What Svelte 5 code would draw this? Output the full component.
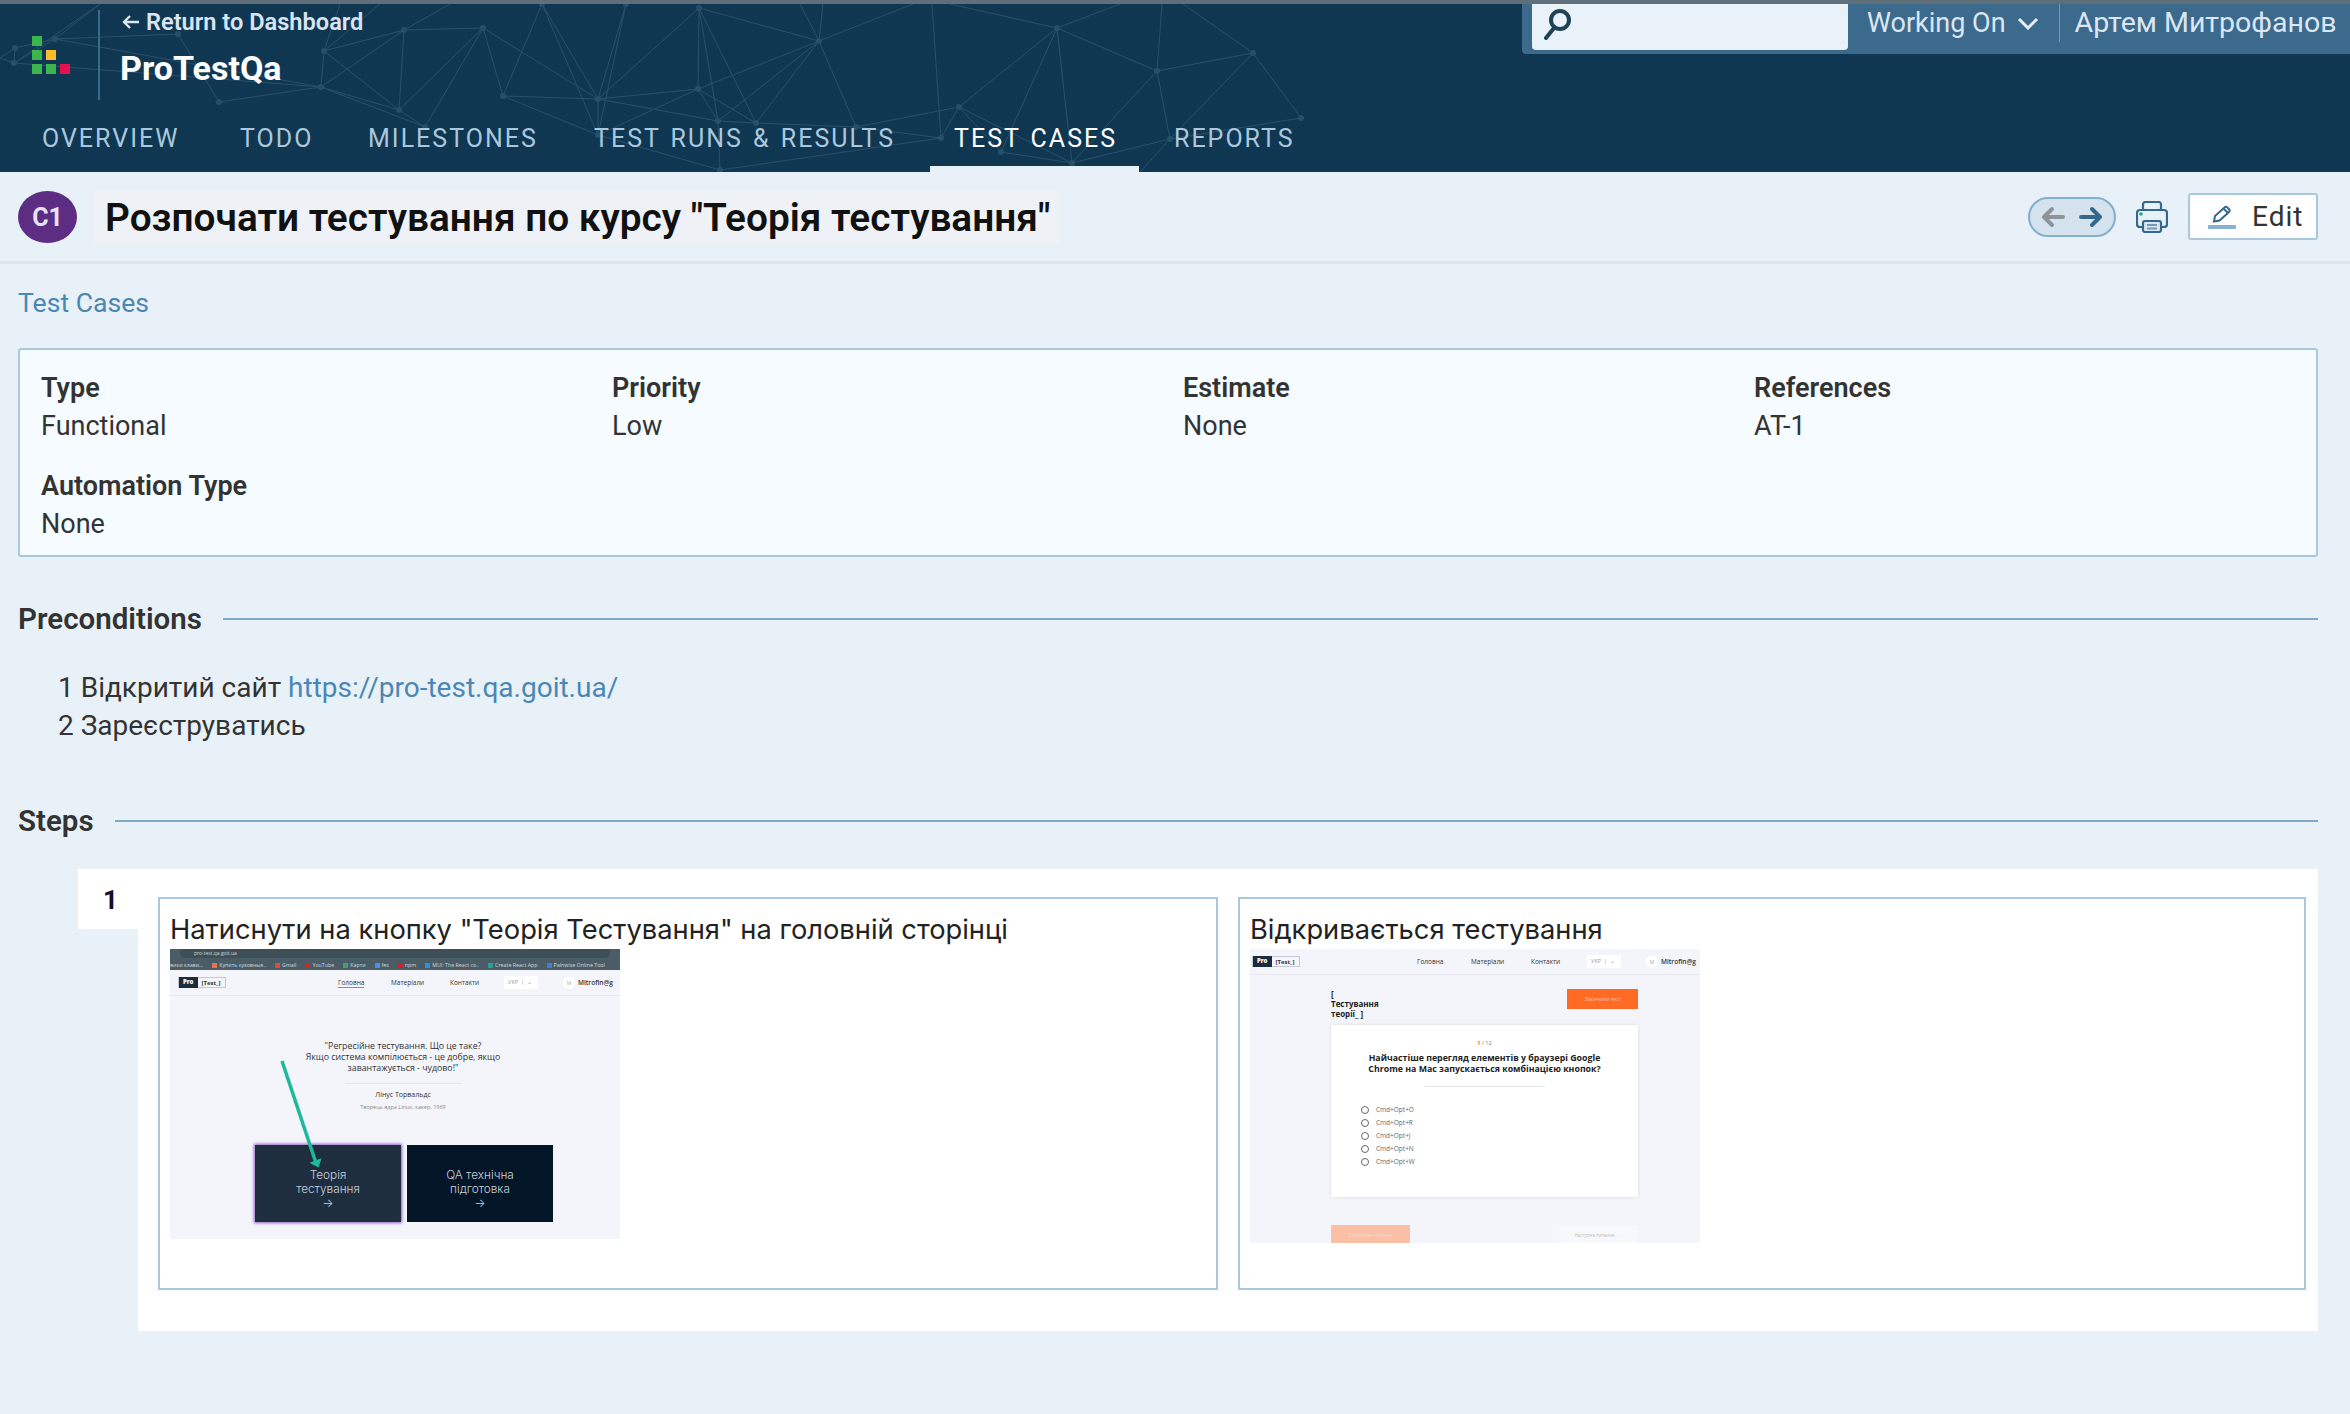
<script>
  const nodes = [
    [15,48],[14,63],[55,39],[178,34],[219,102],[324,51],[321,87],[404,30],[399,110],[483,28],[425,127],
    [503,96],[598,99],[542,4],[626,4],[699,8],[698,89],[819,41],[718,121],[756,123],[856,127],[959,107],
    [941,138],[598,135],[720,170],[1057,28],[1157,71],[1253,53],[1301,118],[1170,139],[1072,163],[1001,152]
  ];
  const tops = [
    [100,4],[340,4],[380,4],[450,4],[1162,4],[1183,4],[1120,4],[950,4],[800,4],[823,4],[0,38],[0,58],[913,4],[932,4],[1140,172]
  ];
  const all = [...nodes, ...tops];
  // ids index into `all`, ids from 32 are the points off the edge of the bar
  const edges = [
    [0,1],[0,2],[1,2],[2,3],[2,32],[1,32],[0,43],[1,43],[2,6],[1,6],[3,4],[4,6],[6,8],[5,6],[5,7],[6,7],[7,8],
    [7,9],[5,8],[8,9],[8,10],[6,10],[9,10],[33,5],[34,5],[35,7],[9,11],[9,12],[13,11],[13,12],[14,12],[14,23],
    [13,23],[11,12],[11,23],[12,15],[12,16],[15,16],[15,17],[16,17],[12,18],[15,18],[15,19],[16,18],[16,19],[18,19],
    [17,18],[17,19],[16,23],[12,23],[18,24],[23,24],[19,20],[17,20],[20,21],[20,22],[21,22],[40,17],[41,17],[44,17],
    [39,25],[25,26],[25,21],[25,31],[25,30],[26,27],[26,29],[26,30],[27,29],[27,28],[28,29],[29,30],[21,31],[21,30],
    [31,30],[22,24],[36,26],[37,27],[38,25],[46,29],[45,22]
  ];
  const tabs = ["OVERVIEW", "TODO", "MILESTONES", "TEST RUNS & RESULTS", "TEST CASES", "REPORTS"];
  const fields = [
    ["Type", "Functional"], ["Priority", "Low"], ["Estimate", "None"], ["References", "AT-1"], ["Automation Type", "None"]
  ];
  const bookmarks = [
    ["Купить кузовные..", "#e8734a"], ["Gmail", "#e04a3f"], ["YouTube", "#e02020"], ["Карти", "#3fa35c"], ["fes", "#4c8bf5"],
    ["npm", "#c8242b"], ["MUI: The React co..", "#2f8fe0"], ["Create React App", "#2aa198"], ["Palnwise Online Tool", "#3d7fd0"]
  ];
  const options = ["Cmd+Opt+O", "Cmd+Opt+R", "Cmd+Opt+J", "Cmd+Opt+N", "Cmd+Opt+W"];
</script>

<div class="page">
  <header class="header">
    <svg class="network" width="2350" height="172" viewBox="0 0 2350 172">
      {#each edges as e}
        <line x1={all[e[0]][0]} y1={all[e[0]][1]} x2={all[e[1]][0]} y2={all[e[1]][1]} />
      {/each}
      {#each nodes as n}
        <circle cx={n[0]} cy={n[1]} r="3" />
      {/each}
    </svg>
    <div class="top">
      <div class="logo">
        <i class="g"></i><i></i><i></i>
        <i class="g"></i><i class="y"></i><i></i>
        <i class="g"></i><i class="g"></i><i class="r"></i>
      </div>
      <div class="brand">
        <div class="back">
          <svg width="18" height="16" viewBox="0 0 18 16"><path d="M8 2 2 8l6 6M2 8h15" fill="none" stroke="#dbe4f3" stroke-width="2.4"/></svg>
          Return to Dashboard
        </div>
        <div class="project">ProTestQa</div>
      </div>
      <div class="panel">
        <div class="search">
          <svg width="30" height="32" viewBox="0 0 30 32"><circle cx="18" cy="12" r="9" fill="none" stroke="#1e4258" stroke-width="4"/><path d="M12 20 4 30" stroke="#1e4258" stroke-width="4" stroke-linecap="round"/></svg>
        </div>
        <div class="working">
          Working On
          <svg width="22" height="14" viewBox="0 0 22 14"><path d="m2 3 9 9 9-9" fill="none" stroke="#e6eef8" stroke-width="3"/></svg>
        </div>
        <div class="user">Артем Митрофанов</div>
      </div>
    </div>
    <nav class="tabs">
      {#each tabs as tab}
        <div class="tab" class:active={tab === "TEST CASES"}><span>{tab}</span></div>
      {/each}
    </nav>
  </header>

  <div class="titlebar">
    <div class="badge">C1</div>
    <h1>Розпочати тестування по курсу "Теорія тестування"</h1>
    <div class="actions">
      <div class="pager">
        <svg width="24" height="22" viewBox="0 0 24 22"><path d="M11 3 3 11l8 8M3 11h19" fill="none" stroke="#8f9499" stroke-width="4" stroke-linecap="round" stroke-linejoin="round"/></svg>
        <svg width="24" height="22" viewBox="0 0 24 22"><path d="m13 3 8 8-8 8M21 11H2" fill="none" stroke="#35688d" stroke-width="4" stroke-linecap="round" stroke-linejoin="round"/></svg>
      </div>
      <svg class="printer" width="32" height="32" viewBox="0 0 32 32">
        <path d="M7 9V3.5A2.5 2.5 0 0 1 9.500 1h13A2.500 2.500 0 0 1 25 3.500V9M7 26H4a3 3 0 0 1-3-3V12a3 3 0 0 1 3-3h24a3 3 0 0 1 3 3v11a3 3 0 0 1-3 3h-3" fill="none" stroke="#35688d" stroke-width="2.200"/>
        <rect x="7" y="20" width="18" height="11" rx="2" fill="#dbe8f3" stroke="#35688d" stroke-width="2.200"/>
        <path d="M11 24h10M11 27.500h10" stroke="#6f9cbd" stroke-width="1.800"/>
        <circle cx="5" cy="13" r="1.800" fill="#1fa77f"/>
      </svg>
      <div class="edit">
        <svg width="28" height="24" viewBox="0 0 28 24">
          <path d="M6 16.500 7 11 16.500 2.500a2 2 0 0 1 2.800 0l1.700 1.700a2 2 0 0 1 0 2.800L11.500 15.500z" fill="none" stroke="#35688d" stroke-width="2"/>
          <path d="m15.500 3.500 4.500 4.500" stroke="#35688d" stroke-width="2"/>
          <rect y="20" width="28" height="4" rx="1" fill="#86b1d0"/>
        </svg>
        Edit
      </div>
    </div>
  </div>

  <main class="content">
    <a class="crumb" href="#top">Test Cases</a>

    <section class="info">
      {#each fields as f}
        <div class="field">
          <div class="label">{f[0]}</div>
          <div>{f[1]}</div>
        </div>
      {/each}
    </section>

    <div class="heading"><span>Preconditions</span><i></i></div>
    <div class="pre">
      <div>1 Відкритий сайт <a href="#top">https://pro-test.qa.goit.ua/</a></div>
      <div>2 Зареєструватись</div>
    </div>

    <div class="heading steps-h"><span>Steps</span><i></i></div>

    <div class="step">
      <div class="num">1</div>
      <div class="cols">
        <div class="box">
          <p>Натиснути на кнопку "Теорія Тестування" на головній сторінці</p>
          <div class="shot one">
            <div class="chrome">
              <div class="addr"><span>pro-test.qa.goit.ua</span></div>
              <div class="marks">
                <span>вики клави...</span>
                {#each bookmarks as b}<span><i style="background: {b[1]}"></i>{b[0]}</span>{/each}
              </div>
            </div>
            <div class="sitenav">
              <div class="sitelogo"><b>Pro</b><span>[Test_]</span></div>
              <div class="menu"><span class="cur">Головна</span><span>Матеріали</span><span>Контакти</span></div>
              <div class="lang">УКР &nbsp;|&nbsp; ⌄</div>
              <div class="ava">М</div>
              <div class="who">Mitrofin@g</div>
            </div>
            <div class="quote">
              <div>"Регресійне тестування. Що це таке?</div>
              <div>Якщо система компілюється - це добре, якщо</div>
              <div>завантажується - чудово!"</div>
              <hr />
              <div class="author">Лінус Торвальдс</div>
              <div class="role">Творець ядра Linux, хакер, 1969</div>
            </div>
            <div class="cards">
              <div class="card sel">Теорія<br />тестування<br />→</div>
              <div class="card">QA технічна<br />підготовка<br />→</div>
            </div>
            <svg class="pointer" width="450" height="290" viewBox="0 0 450 290">
              <path d="M112 112 146 214" stroke="#1fb89a" stroke-width="3.500"/>
              <path d="m142 214 6 3 2-6z" fill="#1fb89a" stroke="#1fb89a" stroke-width="2"/>
            </svg>
          </div>
        </div>
        <div class="box">
          <p>Відкривається тестування</p>
          <div class="shot two">
            <div class="sitenav">
              <div class="sitelogo"><b>Pro</b><span>[Test_]</span></div>
              <div class="menu"><span>Головна</span><span>Матеріали</span><span>Контакти</span></div>
              <div class="lang">УКР &nbsp;|&nbsp; ⌄</div>
              <div class="ava">М</div>
              <div class="who">Mitrofin@g</div>
            </div>
            <div class="quiz">
              <div class="quiz-top">
                <div class="quiz-title">[<br />Тестування<br />теорії_ ]</div>
                <div class="finish">Закінчити тест</div>
              </div>
              <div class="qcard">
                <div class="count"><b>1</b> / 12</div>
                <div class="question">Найчастіше перегляд елементів у браузері Google<br />Chrome на Mac запускається комбінацією кнопок?</div>
                <hr />
                {#each options as o}
                  <div class="opt"><i></i>{o}</div>
                {/each}
              </div>
              <div class="qnav">
                <div class="prev">Попереднє питання</div>
                <div class="next">Наступне питання &nbsp; →</div>
              </div>
            </div>
          </div>
        </div>
      </div>
    </div>
  </main>
</div>

<style>
  :global(body) {
    margin: 0;
    background: #e9f1f8;
  }
  .page {
    width: 2350px;
    height: 1414px;
    overflow: hidden;
    font-family: Roboto, "Liberation Sans", sans-serif;
    color: #333;
    background: #e9f1f8;
  }

  .header {
    position: relative;
    height: 172px;
    box-sizing: border-box;
    border-top: 4px solid #5f6f7a;
    background: #103752;
    overflow: hidden;
  }
  .network {
    position: absolute;
    left: 0;
    top: -4px;
  }
  .network line {
    stroke: #2a5069;
    stroke-width: 1;
  }
  .network circle {
    fill: #24506f;
  }
  .top {
    position: relative;
    display: flex;
    height: 110px;
  }
  .logo {
    display: grid;
    grid-template-columns: repeat(3, 10px);
    grid-auto-rows: 10px;
    gap: 4px;
    margin: 32px 0 0 32px;
    width: 38px;
  }
  .logo .g { background: #3cb54f; }
  .logo .y { background: #fbbc2c; }
  .logo .r { background: #e4104f; }
  .brand {
    margin: 6px 0 0 28px;
    height: 90px;
    padding-left: 21px;
    border-left: 2px solid #3c6a8c;
  }
  .back {
    display: flex;
    align-items: center;
    gap: 6px;
    height: 24px;
    padding-left: 1px;
    font-size: 23.600px;
    font-weight: 600;
    color: #dbe4f3;
  }
  .project {
    margin: 14px 0 0 -1px;
    font-size: 34px;
    line-height: 40px;
    font-weight: 700;
    color: #fff;
  }
  .panel {
    position: absolute;
    right: 0;
    top: 0;
    display: flex;
    height: 50px;
    width: 828px;
    box-sizing: border-box;
    padding-left: 10px;
    background: #3c6a8c;
    border-radius: 0 0 0 4px;
    color: #dbe6f4;
    font-size: 27px;
  }
  .search {
    width: 316px;
    height: 46px;
    box-sizing: border-box;
    padding: 4px 0 0 10px;
    background: #e9f1f9;
    border-radius: 0 0 4px 4px;
  }
  .working {
    display: flex;
    align-items: center;
    gap: 11px;
    height: 38px;
    margin-left: 19px;
    padding-right: 20px;
    border-right: 1px solid #6c9aba;
  }
  .user {
    height: 38px;
    line-height: 38px;
    margin-left: 15px;
    font-size: 28.500px;
    white-space: nowrap;
  }
  .tabs {
    position: relative;
    display: grid;
    grid-template-columns: 198px 128px 226px 360px 220px auto;
    padding-left: 18px;
  }
  .tab {
    height: 58px;
    box-sizing: border-box;
    padding: 10px 0 0 24px;
    font-size: 25px;
    line-height: 30px;
    letter-spacing: 2px;
    word-spacing: 2px;
    color: #a9c8de;
    white-space: nowrap;
  }
  .tab.active {
    margin-right: 11px;
    color: #fff;
    border-bottom: 6px solid #e9f1f8;
  }

  .titlebar {
    display: flex;
    align-items: center;
    height: 92px;
    box-sizing: border-box;
    padding: 0 32px 0 18px;
    border-bottom: 3px solid #d9e6f0;
  }
  .badge {
    width: 59px;
    height: 52px;
    line-height: 54px;
    text-align: center;
    border-radius: 50%;
    background: #5c2d82;
    color: #e9e2f0;
    font-size: 25px;
    font-weight: 700;
  }
  h1 {
    margin: 0 0 0 17px;
    padding: 0 10px 0 11px;
    height: 52px;
    line-height: 54px;
    font-size: 38.800px;
    font-weight: 600;
    color: #111;
    background: #eef1f5;
  }
  .actions {
    margin-left: auto;
    display: flex;
    align-items: center;
  }
  .pager {
    display: flex;
    align-items: center;
    justify-content: center;
    gap: 14px;
    width: 88px;
    height: 40px;
    box-sizing: border-box;
    border: 2px solid #83afcf;
    border-radius: 20px;
    background: #d5e3ee;
  }
  .printer {
    margin-left: 20px;
  }
  .edit {
    display: flex;
    align-items: center;
    gap: 16px;
    margin-left: 20px;
    width: 130px;
    height: 47px;
    box-sizing: border-box;
    padding-left: 18px;
    background: #fff;
    border: 2px solid #a9c8de;
    border-radius: 3px;
    font-size: 28px;
    letter-spacing: 1px;
    color: #333;
  }

  .content {
    padding: 0 32px 0 18px;
  }
  .crumb {
    display: block;
    margin-top: 20px;
    height: 38px;
    line-height: 38px;
    font-size: 26.600px;
    color: #4a87b3;
    text-decoration: none;
  }
  .info {
    display: grid;
    grid-template-columns: repeat(4, 571px);
    row-gap: 10px;
    margin-top: 26px;
    height: 209px;
    box-sizing: border-box;
    padding: 19px 0 0 21px;
    background: #f5fbff;
    border: 2px solid #a9c8de;
    border-radius: 3px;
    font-size: 27px;
    line-height: 38px;
  }
  .label {
    font-weight: 600;
  }
  .heading {
    display: flex;
    align-items: center;
    gap: 21px;
    margin-top: 42px;
    height: 40px;
    font-size: 29.500px;
    font-weight: 600;
  }
  .heading i {
    flex: 1;
    height: 2px;
    background: #7fa9c9;
  }
  .pre {
    margin: 30px 0 0 40px;
    font-size: 28px;
    line-height: 38px;
  }
  .pre a {
    color: #4a87b3;
    text-decoration: none;
  }
  .steps-h {
    margin-top: 56px;
  }
  .step {
    position: relative;
    margin: 28px 0 0 120px;
    height: 462px;
    box-sizing: border-box;
    padding: 28px 10px 0 20px;
    background: #fff;
  }
  .num {
    position: absolute;
    left: -60px;
    top: 0;
    width: 60px;
    height: 60px;
    box-sizing: border-box;
    padding: 16px 0 0 25px;
    background: #fff;
    font-size: 26px;
    font-weight: 700;
    color: #1c0a2a;
  }
  .cols {
    display: grid;
    grid-template-columns: 1060px 1068px;
    gap: 20px;
  }
  .box {
    height: 393px;
    box-sizing: border-box;
    padding: 12px 10px 0;
    border: 2px solid #a9c8de;
  }
  .box p {
    margin: 0;
    height: 38px;
    line-height: 38px;
    font-family: Inter, sans-serif;
    font-size: 27.300px;
    color: #222;
    white-space: nowrap;
  }

  .shot {
    position: relative;
    width: 450px;
    overflow: hidden;
    background: #f4f5fb;
    font-family: "Open Sans", sans-serif;
    color: #333;
    font-size: 6.500px;
  }
  .shot.one { height: 290px; }
  .shot.two { height: 294px; }
  .chrome {
    height: 21px;
    background: #4a5d66;
    color: #cfd8dc;
    font-size: 5px;
    overflow: hidden;
  }
  .addr {
    height: 9px;
    margin: 0 10px;
    padding-left: 14px;
    line-height: 9px;
    background: #3e4f58;
    border-radius: 0 0 5px 5px;
  }
  .marks {
    display: flex;
    gap: 9px;
    margin-top: 2px;
    line-height: 10px;
    font-size: 5.300px;
    white-space: nowrap;
  }
  .marks i {
    display: inline-block;
    width: 5px;
    height: 5px;
    margin-right: 2px;
    vertical-align: -0.500px;
  }
  .sitenav {
    display: flex;
    align-items: center;
    height: 26px;
    box-sizing: border-box;
    padding: 0 0 0 8px;
    border-bottom: 1px solid #e6e7ee;
  }
  .two .sitenav {
    padding-left: 2px;
  }
  .sitelogo {
    display: flex;
    align-items: center;
    width: 48px;
    height: 11px;
    box-sizing: border-box;
    border: 1px solid #c5c9d6;
    font-size: 6px;
    font-weight: 700;
  }
  .sitelogo b {
    height: 11px;
    line-height: 11px;
    padding: 0 5px 0 4px;
    background: #1c2c40;
    color: #fff;
  }
  .sitelogo span {
    padding-left: 3px;
  }
  .menu {
    display: grid;
    grid-template-columns: 53px 59px auto;
    margin-left: 112px;
    width: 166px;
    white-space: nowrap;
  }
  .two .menu {
    margin-left: 117px;
    width: 170px;
    grid-template-columns: 54px 60px auto;
  }
  .menu span {
    justify-self: start;
  }
  .cur {
    border-bottom: 1px solid #ff6b24;
  }
  .lang {
    width: 34px;
    height: 13px;
    line-height: 13px;
    box-sizing: border-box;
    padding-left: 4px;
    background: #fff;
    color: #999;
    font-size: 5.500px;
    white-space: nowrap;
  }
  .ava {
    width: 12px;
    height: 12px;
    line-height: 12px;
    margin-left: 25px;
    text-align: center;
    border-radius: 50%;
    background: #fff;
    color: #aaa;
    font-size: 5px;
  }
  .who {
    margin-left: 3px;
    font-weight: 600;
    white-space: nowrap;
  }
  .quote {
    margin-top: 45px;
    text-align: center;
    font-size: 8.800px;
    line-height: 11px;
    padding-left: 16px;
  }
  .quote hr {
    width: 117px;
    height: 1px;
    margin: 9px auto 5px;
    border: 0;
    background: #e4e5ec;
  }
  .author {
    font-size: 7px;
  }
  .role {
    margin-top: 2px;
    font-size: 5.500px;
    color: #888;
  }
  .cards {
    display: flex;
    gap: 6px;
    margin: 32px 0 0 85px;
  }
  .card {
    width: 146px;
    height: 77px;
    box-sizing: border-box;
    padding-top: 23px;
    text-align: center;
    background: #031628;
    color: #c9d0d8;
    font-family: Inter, sans-serif;
    font-size: 11.800px;
    font-weight: 300;
    line-height: 14px;
  }
  .card.sel {
    background: #1f2e3e;
    box-shadow: 0 0 3px 1px #8a5cc0;
  }
  .pointer {
    position: absolute;
    left: 0;
    top: 0;
  }
  .quiz {
    padding: 14px 62px 0 81px;
  }
  .quiz-top {
    display: flex;
    justify-content: space-between;
    height: 36px;
  }
  .quiz-title {
    font-size: 8px;
    line-height: 10px;
    font-weight: 700;
    color: #222;
  }
  .finish {
    width: 71px;
    height: 20px;
    line-height: 20px;
    text-align: center;
    background: #ff6b24;
    color: #ffc6a8;
    font-size: 5px;
  }
  .qcard {
    height: 172px;
    box-sizing: border-box;
    padding-top: 13px;
    background: #fff;
    box-shadow: 0 0 3px rgba(0, 0, 0, 0.12);
  }
  .count {
    text-align: center;
    line-height: 10px;
    font-size: 5.500px;
    color: #777;
  }
  .count b {
    color: #ff6b24;
  }
  .question {
    margin-top: 5px;
    text-align: center;
    font-size: 8.800px;
    line-height: 11px;
    font-weight: 700;
    color: #222;
  }
  .qcard hr {
    width: 120px;
    height: 1px;
    margin: 11px auto 16px;
    border: 0;
    background: #e4e5ec;
  }
  .opt {
    display: flex;
    align-items: center;
    gap: 7px;
    height: 13px;
    padding-left: 30px;
    font-size: 6.500px;
    color: #666;
  }
  .opt i {
    width: 6px;
    height: 6px;
    border: 1px solid #666;
    border-radius: 50%;
  }
  .qnav {
    display: flex;
    justify-content: space-between;
    margin-top: 28px;
  }
  .prev, .next {
    width: 79px;
    height: 20px;
    line-height: 20px;
    text-align: center;
    font-size: 4.500px;
    white-space: nowrap;
  }
  .prev {
    background: #fbbfa6;
    color: #f4dccf;
  }
  .next {
    background: #f7f8fc;
    color: #bbb;
  }
</style>
